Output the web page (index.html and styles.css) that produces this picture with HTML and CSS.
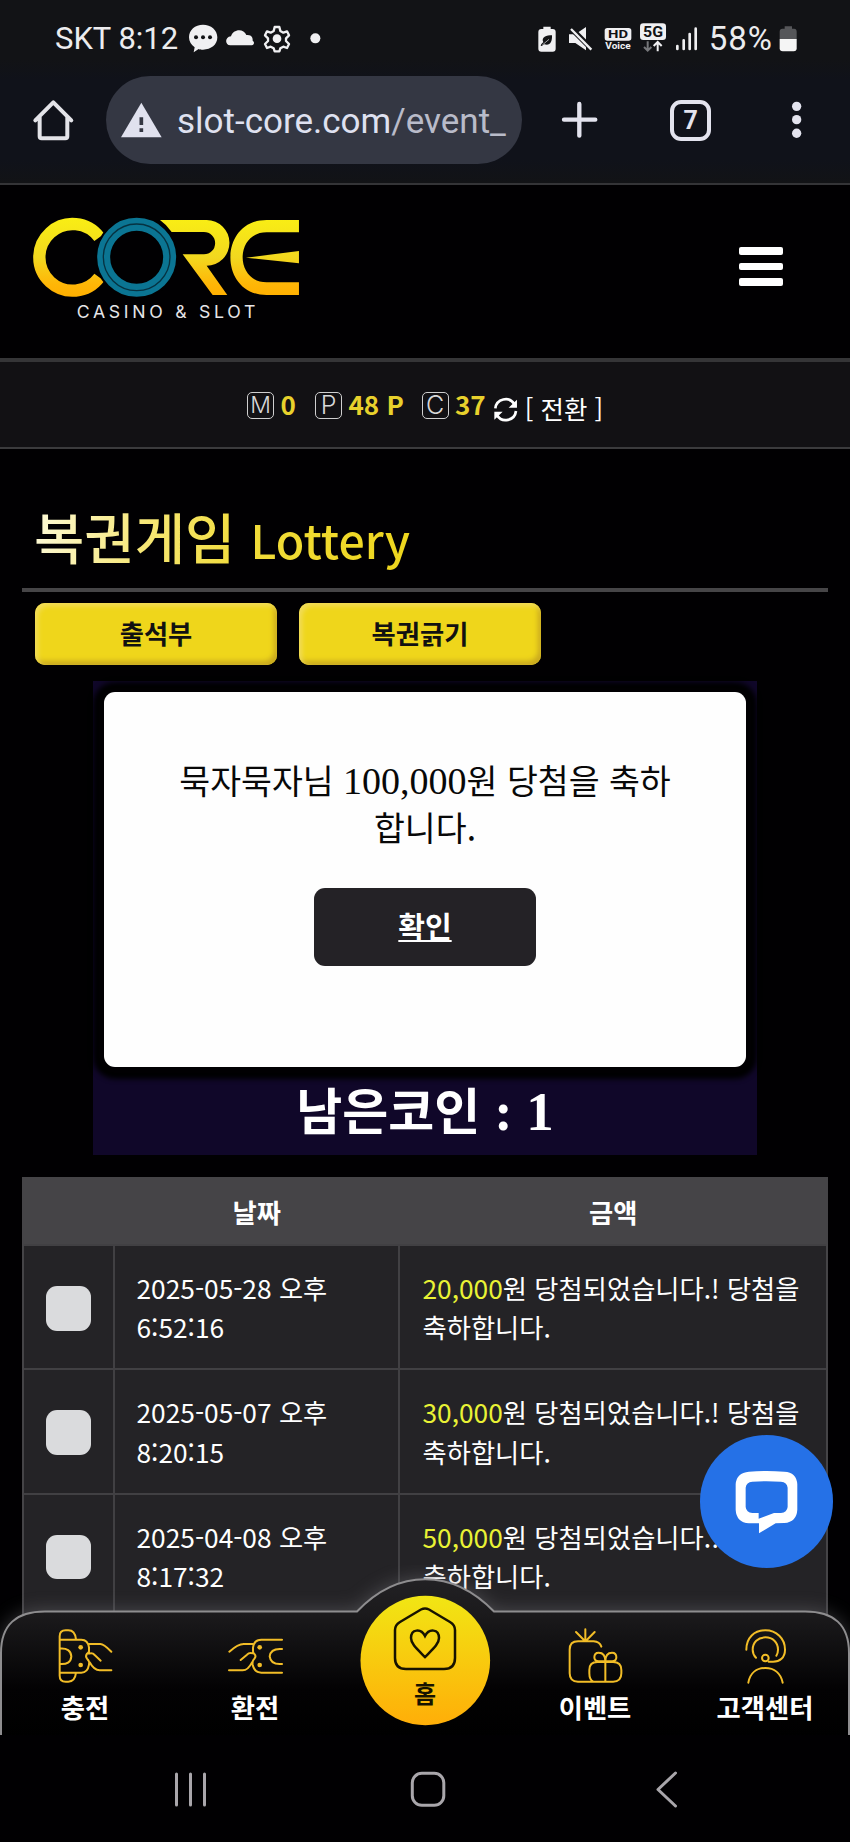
FILE: index.html
```html
<!DOCTYPE html>
<html lang="ko">
<head>
<meta charset="utf-8">
<title>복권게임 Lottery</title>
<link rel="stylesheet" href="styles.css">
</head>
<body>
<div class="phone">
  <div class="chrome">
    <div class="status">
      <span class="status-time">SKT 8:12</span>
      <svg class="status-left" viewBox="560 70 410 95" width="136.7" height="31.7">
        <path fill="#f0f0f2" d="M608 75c24 0 43 16 43 38s-19 37-43 37c-5 0-9 0-13-2l-15 10 3-15c-10-7-17-17-17-30 0-22 18-38 42-38z"/>
        <g fill="#121316"><circle cx="587" cy="113" r="6"/><circle cx="608" cy="113" r="6"/><circle cx="629" cy="113" r="6"/></g>
        <path fill="#f0f0f2" d="M690 137c-16 0-18-25 2-27 5-22 38-26 46-4 17-2 20 10 19 17 8 5 3 14-5 14z"/>
        <path fill="none" stroke="#f0f0f2" stroke-width="7" stroke-linejoin="round" d="M823 82h14l3 12 9 5 11-4 6 12-9 9v8l9 9-6 12-11-4-9 5-3 9h-14l-3-9-9-5-11 4-6-12 9-9v-8l-9-9 6-12 11 4 9-5z"/>
        <circle cx="830" cy="117" r="13" fill="#f0f0f2"/>
        <circle cx="945" cy="116" r="15" fill="#f0f0f2"/>
      </svg>
      <svg class="status-right" viewBox="330 65 500 95" width="166.7" height="31.7">
        <path fill="#f0f0f2" d="M355 79h22v7h6q9 0 9 9v50q0 9-9 9h-34q-9 0-9-9V95q0-9 9-9h6z"/>
        <path fill="#121316" d="M347 136c2-6 5-8 8-10-8-16 10-21 26-21 1 20-6 32-23 27-3 1-5 3-7 5z"/>
        <path stroke="#f0f0f2" stroke-width="2" d="M352 134l20-17"/>
        <path fill="#f0f0f2" d="M432 102h19l32-22v70l-32-22h-19z"/>
        <path stroke="#121316" stroke-width="16" d="M436 82l66 66"/>
        <path stroke="#f0f0f2" stroke-width="7" d="M438 86l61 62"/>
        <rect x="539" y="83" width="80" height="38" rx="8" fill="#f0f0f2"/>
        <text class="badge-text" x="549" y="114" font-size="33" textLength="60" lengthAdjust="spacingAndGlyphs" fill="#121316">HD</text>
        <text class="badge-text" x="541" y="147" font-size="27" textLength="76" lengthAdjust="spacingAndGlyphs" fill="#f0f0f2">Voice</text>
        <rect x="645" y="69" width="78" height="50" rx="10" fill="#f0f0f2"/>
        <text class="badge-text" x="654" y="110" font-size="44" textLength="60" lengthAdjust="spacingAndGlyphs" fill="#121316">5G</text>
        <path fill="none" stroke="#77787b" stroke-width="6" d="M668 123v28m-11-11l11 11 11-11"/>
        <path fill="none" stroke="#f0f0f2" stroke-width="6" d="M698 153v-28m-12 12l12-12 12 12"/>
        <path stroke="#f0f0f2" stroke-width="8" stroke-linecap="round" d="M757 137v9M776 120v26M794 101v45M812 85v61"/>
      </svg>
      <span class="status-pct">58%</span>
      <svg viewBox="1060 75 56 80" width="18.7" height="26.7">
        <path fill="#555659" d="M1077 79h22v7h6q8 0 8 9v23h-51V95q0-9 8-9h7z"/>
        <path fill="#f5f5f5" d="M1062 117h51v28q0 9-9 9h-33q-9 0-9-9z"/>
      </svg>
    </div>
    <div class="toolbar">
      <svg class="ic-home" viewBox="96 295 130 132" width="43.3" height="44">
        <path fill="none" stroke="#e3e3e8" stroke-width="12" stroke-linejoin="round" stroke-linecap="round" d="M106 362l54-54 54 54M119 352v58q0 6 6 6h71q6 0 6-6v-58"/>
      </svg>
      <div class="omnibox">
        <svg viewBox="360 300 126 108" width="42" height="36">
          <path fill="#e0e1ee" d="M424 302l61 104H363z"/>
          <path stroke="#343743" stroke-width="11" d="M424 346v23M424 379v11"/>
        </svg>
        <span class="url">slot-core.com<span class="url-path">/event_</span></span>
      </div>
      <svg class="ic-plus" viewBox="410 305 112 112" width="37.3" height="37.3">
        <path stroke="#e3e3ee" stroke-width="13" stroke-linecap="round" d="M419 361h94M465 314v95"/>
      </svg>
      <div class="tabs">7</div>
      <svg class="ic-more" viewBox="1098 305 34 112" width="11.3" height="37.3">
        <g fill="#e3e3ee"><circle cx="1115" cy="321" r="14"/><circle cx="1115" cy="361" r="14"/><circle cx="1115" cy="402" r="14"/></g>
      </svg>
    </div>
  </div>

  <header class="site-header">
    <svg class="logo" viewBox="90 75 820 320" width="273.3" height="106.7">
      <defs>
        <linearGradient id="gold" gradientUnits="userSpaceOnUse" x1="0" y1="84" x2="0" y2="320">
          <stop offset="0" stop-color="#f9ee14"/><stop offset=".5" stop-color="#f2d81f"/><stop offset=".85" stop-color="#ffb506"/><stop offset="1" stop-color="#ffb000"/>
        </linearGradient>
      </defs>
      <path fill="none" stroke="url(#gold)" stroke-width="37" d="M298 142a100 100 0 1 0 0 120"/>
      <circle cx="410" cy="202" r="125" fill="#010002"/>
      <circle cx="410" cy="202" r="99" fill="none" stroke="#0b7593" stroke-width="39"/>
      <circle cx="410" cy="202" r="100" fill="none" stroke="#063241" stroke-width="4"/>
      <path fill="url(#gold)" d="M480 90H620A68 68 0 0 1 620 227L682 315H638L548 193H612A33 33 0 0 0 612 126H515Q500 104 480 90zM897 90H800C655 90 655 315 800 315H897V277H800C704 277 704 127 800 127H897zM738 203l159-20v37z"/>
      <text class="logo-sub" x="230" y="383" font-size="53" textLength="536">CASINO &amp; SLOT</text>
    </svg>
    <div class="burger"><i></i><i></i><i></i></div>
  </header>

  <div class="wallet">
    <span class="coin coin-m">M</span><b class="v-m">0</b>
    <span class="coin">P</span><b class="v-p">48 P</b>
    <span class="coin">C</span><b class="v-c">37</b>
    <svg class="ic-sync" viewBox="816 142 76 76" width="25.3" height="25.3">
      <g fill="none" stroke="#fff" stroke-width="8"><path d="M823 176a31 31 0 0 1 57-13"/><path d="M885 184a31 31 0 0 1-57 13"/></g>
      <path fill="#fff" d="M888 150v24h-25zM820 210v-24h25z"/>
    </svg>
    <span class="convert">[ 전환 ]</span>
  </div>

  <main class="page">
    <h1 class="title"><span>복권게임 <small>Lottery</small></span></h1>
    <div class="tabs-row"><a class="btn">출석부</a><a class="btn">복권긁기</a></div>
    <section class="game">
      <div class="modal">
        <p>묵자묵자님 <span class="num">100,000</span>원 당첨을 축하<br>합니다.</p>
        <a class="ok">확인</a>
      </div>
      <div class="coins">남은코인 <span>: 1</span></div>
    </section>
    <div class="table">
      <div class="row head"><div></div><div>날짜</div><div>금액</div></div>
      <div class="row"><div class="check"><i></i></div><div>2025-05-28 오후 6:52:16</div><div><em>20,000</em>원 당첨되었습니다.! 당첨을 축하합니다.</div></div>
      <div class="row"><div class="check"><i></i></div><div>2025-05-07 오후 8:20:15</div><div><em>30,000</em>원 당첨되었습니다.! 당첨을 축하합니다.</div></div>
      <div class="row"><div class="check"><i></i></div><div>2025-04-08 오후 8:17:32</div><div><em>50,000</em>원 당첨되었습니다.! 당첨을 축하합니다.</div></div>
    </div>
  </main>

  <div class="chat">
    <svg viewBox="925 930 196 196" width="65.3" height="65.3">
      <path fill="#fff" fill-rule="evenodd" d="M970 938Q1022 934 1076 938Q1113 940 1115 976V1052Q1113 1089 1076 1092L1050 1093L1000 1123V1093H970Q932 1090 930 1052V976Q932 941 970 938zM980 968Q962 969 960 986V1044Q962 1061 980 1062H999V1079L1045 1062H1066Q1084 1061 1086 1044V986Q1084 969 1066 968Q1022 965 980 968z"/>
    </svg>
  </div>

  <nav class="dock">
    <svg class="dock-bg" viewBox="0 0 850 170" width="850" height="170">
      <defs>
        <linearGradient id="dockfill" x1="0" y1="0" x2="0" y2="1"><stop offset="0" stop-color="#222124"/><stop offset=".22" stop-color="#1b1a1c"/><stop offset=".7" stop-color="#030203"/><stop offset="1" stop-color="#000"/></linearGradient>
        <linearGradient id="sun" x1="0" y1="0" x2="0" y2="1"><stop offset="0" stop-color="#f1e614"/><stop offset="1" stop-color="#ffae08"/></linearGradient>
      </defs>
      <path class="dock-shape" fill="url(#dockfill)" stroke="#8e8d8f" stroke-width="2" d="M1 172V88Q1 46 46 46.500H357C398 3.500 452 3.500 494 46.500H804Q849 46 849 88V172"/>
      <circle cx="425.3" cy="95.500" r="64.800" fill="url(#sun)"/>
    </svg>
    <div class="dock-items">
      <a><svg viewBox="170 175 170 170" width="56.700" height="56.700"><g class="line">
        <path d="M178 210v108q0 18 18 18h8q20 0 23-27M178 309V200q0-18 18-18h8q20 0 23 27M178 210h65q20 0 23 24v8q1 7-6 10-6 8 0 15 8 6 6 18-4 24-23 24h-65M178 237q33-3 35 23-2 26-35 23M265 223h35q10 0 33 23M266 252q10-4 17 4l18 17M268 278q13 24 30 24h35"/></g>
        <g fill="#f2bd27"><circle cx="241" cy="233" r="7"/><circle cx="241" cy="286" r="7"/></g></svg><span>충전</span></a>
      <a><svg viewBox="680 175 170 170" width="56.700" height="56.700"><g class="line">
        <path d="M845 210h-62q-22 0-25 24v8q-1 7 4 11 7 7 0 14-7 6-5 18 5 24 26 24h62M845 238q-34-3-37 22 3 26 37 23M757 223h-27q-17 0-43 23M758 251q-11-4-18 4l-19 16M755 278q-12 24-28 24h-41"/></g>
        <g fill="#f2bd27"><circle cx="778" cy="233" r="7"/><circle cx="778" cy="286" r="7"/></g></svg><span>환전</span></a>
      <a class="home"><svg viewBox="0 0 68 66" width="68" height="66"><path class="dark" d="M30 4.500q4-2 8 0L59 17q5 3 5 8v28q0 11-11 11H15Q4 64 4 53V25q0-5 5-8z"/><path class="dark" d="M34 52C26 44 20 39 20 33c0-9 10-10 14-2 4-8 14-7 14 2 0 6-6 11-14 19z"/></svg><span>홈</span></a>
      <a><svg viewBox="425 175 170 170" width="56.700" height="56.700"><g class="line">
        <path d="M528 231q-5-15-23-16h-47q-25 0-25 25v71q0 25 25 25h105q25 0 25-25v-10q0-24-25-24h-47q-24 0-24 24v10q0 20 12 25M540 277v58M540 275h-20q-13 0-13-12 0-14 13-14 20 0 20 26 0-26 20-26 13 0 13 14 0 12-13 12zM480 214v-35M478 213l-26-26M482 213l26-26"/></g></svg><span>이벤트</span></a>
      <a><svg viewBox="935 175 170 170" width="56.700" height="56.700"><g class="line">
        <path d="M963 240c0-36 24-58 57-58s59 24 59 58c0 24-16 36-36 36h-13M992 264c-8-8-10-14-10-24 0-22 16-37 38-37s38 15 38 37c0 8-2 13-5 18M969 339c5-29 25-44 51-44s46 15 52 44"/><circle cx="1020" cy="265" r="10"/></g></svg><span>고객센터</span></a>
    </div>
  </nav>

  <div class="sysnav">
    <svg viewBox="0 0 850 107" width="850" height="107"><g fill="none" stroke="#a9a6ab" stroke-width="3" stroke-linecap="round" stroke-linejoin="round">
      <path d="M176.500 39v31M190.500 39v31M204.500 39v31"/><rect x="412.300" y="38.300" width="31.500" height="32" rx="9.500"/><path d="M675.500 38L658 54.500l17.500 16.500"/></g></svg>
  </div>
</div>
</body>
</html>
```
FILE: styles.css
```css
* { box-sizing: border-box; }
body { margin: 0; background: #010002; }
svg { display: block; flex: none; }
.phone {
  position: relative; width: 850px; height: 1842px; overflow: hidden;
  background: #010002; color: #fff; font-family: "Noto Sans CJK KR", sans-serif;
}

/* Browser chrome */
.chrome { height: 185px; background: linear-gradient(#121316 60px, #10121a 80px, #10121a 160px, #121316); border-bottom: 2px solid #343437; font-family: Roboto, sans-serif; }
.status { height: 76px; padding: 23px 0 0 55px; display: flex; align-items: flex-start; color: #ececee; line-height: 32px; }
.status-time { font-size: 31px; width: 131.700px; white-space: nowrap; }
.status-left { margin-right: 211.600px; }
.status-right { margin-top: -1.500px; }
.status-pct { font-size: 33px; letter-spacing: 1px; width: 70px; margin-left: 7px; white-space: nowrap; }
.status svg:last-child { margin: 2px 0 0 0; }
.toolbar { height: 88px; display: flex; align-items: center; padding-left: 32px; }
.omnibox { width: 416px; height: 88px; margin-left: 30.700px; padding-left: 14px; border-radius: 44px; background: #343743; display: flex; align-items: center; gap: 15px; }
.url { font-size: 35px; color: #dfe1f0; white-space: nowrap; padding-top: 2px; }
.url-path { color: #b9bbc9; }
.ic-plus { margin-left: 39.500px; }
.tabs { width: 41px; height: 41px; margin: 0 80px 0 71.500px; border: 4.500px solid #e3e3ee; border-radius: 11px; color: #e3e3ee; font-size: 25px; font-weight: 700; line-height: 33px; text-align: center; }
.badge-text { font-family: Roboto, sans-serif; font-weight: 700; }

/* Site header */
.site-header { height: 177px; border-bottom: 4px solid #353537; display: flex; justify-content: space-between; padding: 30px 67px 0 30px; }
.logo-sub { font-family: Inter, sans-serif; fill: #e6e5e8; }
.burger { width: 44px; padding-top: 32px; display: flex; flex-direction: column; gap: 8px; }
.burger i { height: 7.500px; background: #fff; border-radius: 2px; }

.wallet { height: 87px; background: #121114; border-bottom: 2px solid #3b3b3d; display: flex; padding: 30px 0 0 247px; }
.coin { width: 27px; height: 27px; border: 1.500px solid #cfcfcf; border-radius: 5px; font: 300 25px/24px Inter, sans-serif; text-align: center; color: #d8d8d8; }
.coin-m { font-size: 23px; }
.wallet b { font-size: 26px; line-height: 30px; color: #e8d12c; margin-left: 6.500px; margin-top: -3px; white-space: nowrap; }
.v-m { width: 34.500px; }
.v-p { width: 73px; }
.v-c { width: 37.500px; }
.ic-sync { margin-top: 5px; }
.convert { font-size: 25.500px; line-height: 31px; margin: 0 0 0 7px; white-space: nowrap; }

/* Lottery page */
.page { padding: 0 22px; }
.title { margin: 0; height: 143px; border-bottom: 4px solid #464547; padding: 47px 0 0 12px; font-size: 54.700px; line-height: 80px; font-weight: 500; }
.title span { background: linear-gradient(100deg, #fdfadb 0, #f7e777 30%, #f1dc3c 55%, #eed61c 100%); -webkit-background-clip: text; background-clip: text; color: transparent; }
.title small { font-size: 46.500px; }
.tabs-row { display: flex; gap: 22px; padding: 11px 0 0 13px; }
.btn { width: 242px; height: 62px; border-radius: 10px; background: #efd61b; color: #111; font-size: 26.300px; font-weight: 700; line-height: 60px; text-align: center; box-shadow: inset 3px 3px 5px #f2dd5c, inset -3px -4px 5px #c9a91f; }
.game { width: 664px; height: 474px; margin: 16px 0 22px 71px; padding: 11px; background: #100729; }
.modal { width: 642px; height: 375px; border-radius: 11px; background: #fefefe; box-shadow: 0 1px 5px 11px #010002; color: #080808; display: flex; flex-direction: column; align-items: center; padding-top: 64px; }
.modal p { margin: 0; font-size: 33.600px; line-height: 47.300px; text-align: center; white-space: nowrap; }
.num { font-family: "Liberation Serif", serif; font-size: 38px; line-height: 1; }
.ok { width: 222px; height: 78px; margin-top: 37.400px; border-radius: 11px; background: #242226; color: #fff; font-size: 29px; font-weight: 700; line-height: 74px; text-align: center; text-decoration: underline; }
.coins { font-size: 50px; line-height: 80px; font-weight: 700; text-align: center; margin-top: 1px; white-space: nowrap; }
.coins span { font-family: "Liberation Serif", serif; font-size: 55px; line-height: 1; }

.table { border: 2px solid #454447; border-top: 0; background: #242326; font-size: 26.300px; line-height: 39.300px; }
.row { display: grid; grid-template-columns: 89px 284.500px 428.500px; height: 124.300px; border-bottom: 2px solid #414043; }
.row > div { padding: 22px 22px 0 21.500px; }
.row > div + div { border-left: 2px solid #414043; }
.row > div:last-child { padding: 22px 20px 0 23px; }
.row.head { height: 69px; background: #454447; font-weight: 700; text-align: center; }
.row.head > div, .row.head > div:last-child { padding: 15px 20px 0 23px; border: 0; }
.row > .check { padding: 40px 0 0 21.500px; }
.check i { display: block; width: 45px; height: 44.500px; border-radius: 11px; background: #dadbdd; }
.row em { font-style: normal; color: #e9f235; }

/* Overlays */
.chat { position: absolute; left: 700px; top: 1435px; width: 133px; height: 132.500px; border-radius: 50%; background: #2571e7; display: flex; justify-content: center; padding-top: 34px; }
.dock { position: absolute; left: 0; top: 1565px; width: 850px; height: 170px; }
.dock-bg { position: absolute; left: 0; top: 0; }
.dock-shape { filter: drop-shadow(0 0 9px rgba(150, 150, 155, .35)); }
.dock-items { position: relative; display: grid; grid-template-columns: repeat(5, 170px); }
.dock-items a { display: flex; flex-direction: column; align-items: center; padding-top: 63px; font-size: 26.300px; font-weight: 700; line-height: 38px; }
.dock-items a span { margin-top: 3px; }
.dock-items .home { padding-top: 40px; color: #171300; font-size: 24px; }
.dock-items .home span { margin-top: 3px; }
.line { fill: none; stroke: #f2bd27; stroke-width: 6; stroke-linecap: round; stroke-linejoin: round; }
.dark { fill: none; stroke: #171300; stroke-width: 2.500; }
.sysnav { position: absolute; left: 0; top: 1735px; width: 850px; height: 107px; background: #010002; }
```
